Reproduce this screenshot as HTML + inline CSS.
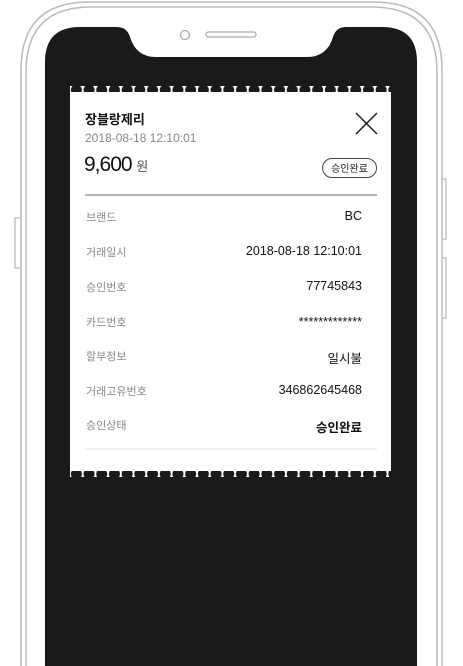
<!DOCTYPE html><html><head><meta charset="utf-8"><style>
html,body{margin:0;width:463px;height:666px;overflow:hidden}
body{background:#fff;position:relative;font-family:"Liberation Sans","Noto Sans CJK KR",sans-serif}
svg{position:absolute;left:0;top:0}
.t{position:absolute;white-space:nowrap}
.l{position:absolute;left:86px;font-size:11px;color:#888}
.v{position:absolute;right:101px;font-size:12.5px;color:#111}
</style></head><body>
<svg width="463" height="666">
<defs><pattern id="sc" x="70" y="0" width="12.7" height="12" patternUnits="userSpaceOnUse"><circle cx="6.35" cy="6" r="5.5" fill="#1a1a1a"/></pattern></defs>
<path d="M21 666 V70 Q21 2 89 2 H374 Q442 2 442 70 V666" fill="none" stroke="#bbb" stroke-width="1.5"/>
<path d="M26 666 V72 Q26 7 91 7 H372 Q437 7 437 72 V666" fill="none" stroke="#bbb" stroke-width="1.5"/>
<path d="M20 218 H15 V268 H20" fill="none" stroke="#bbb" stroke-width="1.3"/>
<path d="M442 179 H446 V239 H442 M442 258 H446 V318 H442" fill="none" stroke="#bbb" stroke-width="1.3"/>
<path d="M45 666 V62 Q45 27 80 27 H117 Q127 27 130 37 Q136 57 156 57 H307 Q327 57 333 37 Q336 27 346 27 H382 Q417 27 417 62 V666 Z" fill="#1a1a1a"/>
<circle cx="185" cy="35" r="4.5" fill="none" stroke="#aaa" stroke-width="1.3"/>
<rect x="206" y="32" width="50" height="5" rx="2.5" fill="none" stroke="#aaa" stroke-width="1.3"/>
<rect x="70" y="86" width="321" height="392" fill="#fff"/>
<rect x="70" y="80" width="321" height="12" fill="url(#sc)"/>
<rect x="70" y="471" width="321" height="12" fill="url(#sc)"/>
<rect x="70" y="477" width="321" height="4" fill="#1a1a1a"/>
<path d="M356 113 L377 134 M377 113 L356 134" stroke="#222" stroke-width="1.5"/>
<rect x="322.5" y="158.5" width="54" height="19" rx="9.5" fill="none" stroke="#444"/>
<line x1="85" y1="195" x2="377" y2="195" stroke="#888" stroke-width="1.3"/>
<line x1="85" y1="449" x2="377" y2="449" stroke="#e3e3e3" stroke-width="1.3"/>
</svg>
<div class="t" style="left:85px;top:109px;font-size:13px;font-weight:bold;color:#111">장블랑제리</div>
<div class="t" style="left:85px;top:131px;font-size:12px;color:#888">2018-08-18 12:10:01</div>
<div class="t" style="left:84px;top:153px;font-size:21px;color:#111;letter-spacing:-1px">9,600 <span style="font-size:13px;color:#555;letter-spacing:0">원</span></div>
<div class="t" style="left:322px;top:160px;width:55px;text-align:center;font-size:10px;color:#222">승인완료</div>
<div class="l" style="top:209px">브랜드</div><div class="v" style="top:209px">BC</div>
<div class="l" style="top:244px">거래일시</div><div class="v" style="top:244px">2018-08-18 12:10:01</div>
<div class="l" style="top:279px">승인번호</div><div class="v" style="top:279px">77745843</div>
<div class="l" style="top:314px">카드번호</div><div class="v" style="top:315px">*************</div>
<div class="l" style="top:348px">할부정보</div><div class="v" style="top:348px">일시불</div>
<div class="l" style="top:383px">거래고유번호</div><div class="v" style="top:383px">346862645468</div>
<div class="l" style="top:417px">승인상태</div><div class="v" style="top:417px;font-weight:bold">승인완료</div>
</body></html>
